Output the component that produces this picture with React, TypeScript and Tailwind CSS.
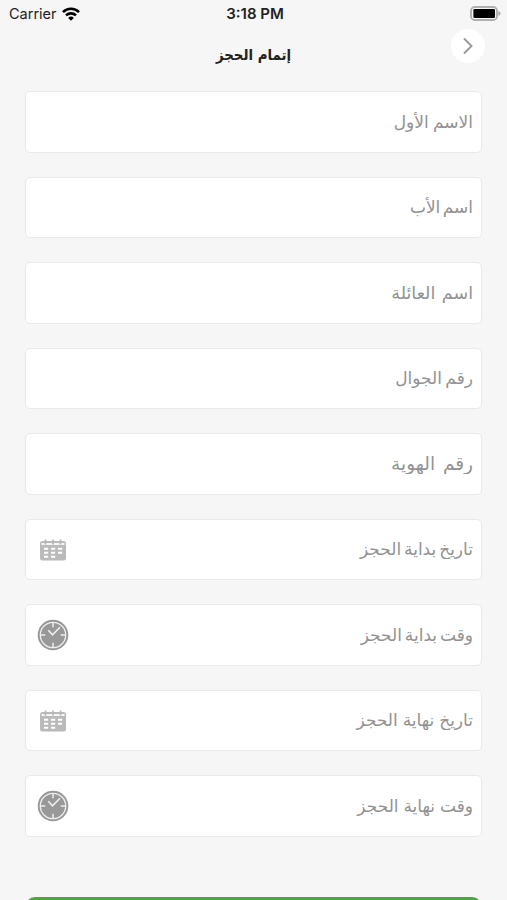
import { useState } from 'react';

type FieldType = 'text' | 'date' | 'time';

interface Field {
  id: string;
  label: string;
  type: FieldType;
  textClass: string;
}

const fields: Field[] = [
  { id: 'firstName', label: 'الاسم الأول', type: 'text', textClass: 'text-[17px] [word-spacing:-1px]' },
  { id: 'fatherName', label: 'اسم الأب', type: 'text', textClass: 'text-[17px] [word-spacing:-3px]' },
  { id: 'familyName', label: 'اسم العائلة', type: 'text', textClass: 'text-[17.5px] [word-spacing:1px]' },
  { id: 'mobile', label: 'رقم الجوال', type: 'text', textClass: 'text-[17px] [word-spacing:-2px]' },
  { id: 'idNumber', label: 'رقم الهوية', type: 'text', textClass: 'text-[18.5px] [word-spacing:2px]' },
  { id: 'startDate', label: 'تاريخ بداية الحجز', type: 'date', textClass: 'text-[17px] [word-spacing:-2.5px]' },
  { id: 'startTime', label: 'وقت بداية الحجز', type: 'time', textClass: 'text-[17px] [word-spacing:-2.5px]' },
  { id: 'endDate', label: 'تاريخ نهاية الحجز', type: 'date', textClass: 'text-[17px] [word-spacing:-0.5px]' },
  { id: 'endTime', label: 'وقت نهاية الحجز', type: 'time', textClass: 'text-[17px] [word-spacing:-0.5px]' },
];

function WifiIcon() {
  return (
    <svg width="18" height="14" viewBox="0 0 18 14" fill="none" stroke="#000" strokeWidth="2.6">
      <path d="M1 5.1a11.4 11.4 0 0 1 16 0" />
      <path d="M4 8.4a7.2 7.2 0 0 1 10 0" />
      <path d="M9 13.8 6.2 10.9a4 4 0 0 1 5.6 0Z" fill="#000" stroke="none" />
    </svg>
  );
}

function BatteryIcon() {
  return (
    <svg width="31" height="15" viewBox="0 0 31 15" fill="none">
      <rect x="1" y="1" width="26" height="13" rx="3.8" stroke="#b0b0b0" strokeWidth="1.9" />
      <rect x="3.4" y="3" width="21.6" height="9" rx="1.2" fill="#000" />
      <path d="M28.4 5v5c1.3-.6 2.1-1.5 2.1-2.5S29.700 5.600 28.400 5Z" fill="#a9a9a9" />
    </svg>
  );
}

function CalendarIcon() {
  return (
    <svg width="28" height="22" viewBox="0 0 28 22" fill="none">
      <rect x="1" y="2" width="26" height="19.500" rx="2.500" fill="#bababa" />
      <path d="M2.500 5h23" stroke="#f4f4f4" strokeWidth="2" />
      <path d="M6.500 0.500v5M14 0.500v5M21.500 0.500v5" stroke="#b5b5b5" strokeWidth="1.600" />
      <path
        d="M5 8.700h4.200v2H5zM12 8.700h4.200v2H12zM19 8.700h4.200v2H19zM5 12.700h4.200v2H5zM12 12.700h4.200v2H12zM19 12.700h4.200v2H19zM5 16.700h4.200v2H5zM12 16.700h4.200v2H12z"
        fill="#fff"
      />
    </svg>
  );
}

function ClockIcon() {
  return (
    <svg width="32" height="32" viewBox="0 0 32 32" fill="none">
      <circle cx="16" cy="16" r="15.300" fill="#989898" />
      <circle cx="16" cy="16" r="12.700" stroke="#eee" strokeWidth="1.300" />
      <path d="M16 4v4.300M16 23.700V28M4 16h4.300M23.700 16H28" stroke="#eee" strokeWidth="1.500" />
      <path d="m11.300 11.300 4.200 4.500 7.500-7.500" stroke="#eee" strokeWidth="1.600" />
    </svg>
  );
}

function StatusBar() {
  return (
    <div className="grid h-7 grid-cols-3 items-center pl-[9px] pr-1.5 font-[Inter,sans-serif] text-[#222]">
      <div className="flex items-center gap-[5px]">
        <span className="text-[14.5px]">Carrier</span>
        <WifiIcon />
      </div>
      <span className="text-center text-[15px] font-semibold">3:18 PM</span>
      <div className="flex justify-end pb-0.5">
        <BatteryIcon />
      </div>
    </div>
  );
}

function FormField({ field, value, onChange }: { field: Field; value: string; onChange: (v: string) => void }) {
  return (
    <label dir="rtl" className="flex h-[61.5px] items-center rounded-[5px] border border-[#e9e9e9] bg-white pr-2 pl-[11px]">
      <input
        type="text"
        value={value}
        onChange={e => onChange(e.target.value)}
        placeholder={field.label}
        className={`h-full min-w-0 flex-1 bg-transparent text-[#777] outline-none placeholder:text-[#929292] ${field.textClass}`}
      />
      {field.type === 'date' && <span className="flex w-8 justify-end pt-0.5 pl-0.5"><CalendarIcon /></span>}
      {field.type === 'time' && <ClockIcon />}
    </label>
  );
}

export default function App() {
  const [values, setValues] = useState<Record<string, string>>({});

  return (
    <div className="h-[900px] overflow-hidden bg-[#f6f6f6] font-['DejaVu_Sans',sans-serif]">
      <StatusBar />

      {/* Header */}
      <header className="grid h-[63px] grid-cols-[34px_1fr_34px] px-[22px]">
        <span />
        <h1 dir="rtl" className="scale-x-[0.89] pt-[15px] text-center text-[15px] leading-6 font-bold text-[#222]">إتمام الحجز</h1>
        <button className="mt-[1px] flex size-[34px] items-center justify-center rounded-full bg-white">
          <svg width="12" height="18" viewBox="0 0 12 18" fill="none" stroke="#999" strokeWidth="1.900">
            <path d="m2 1.500 7.500 7.500L2 16.500" />
          </svg>
        </button>
      </header>

      {/* Booking form */}
      <form className="flex flex-col gap-6 px-[25px]">
        {fields.map(field => (
          <FormField
            key={field.id}
            field={field}
            value={values[field.id] ?? ''}
            onChange={v => setValues({ ...values, [field.id]: v })}
          />
        ))}
        <button type="button" aria-label="إتمام الحجز" className="mt-9 h-[62px] rounded-[10px] bg-[#4ca444]" />
      </form>
    </div>
  );
}
